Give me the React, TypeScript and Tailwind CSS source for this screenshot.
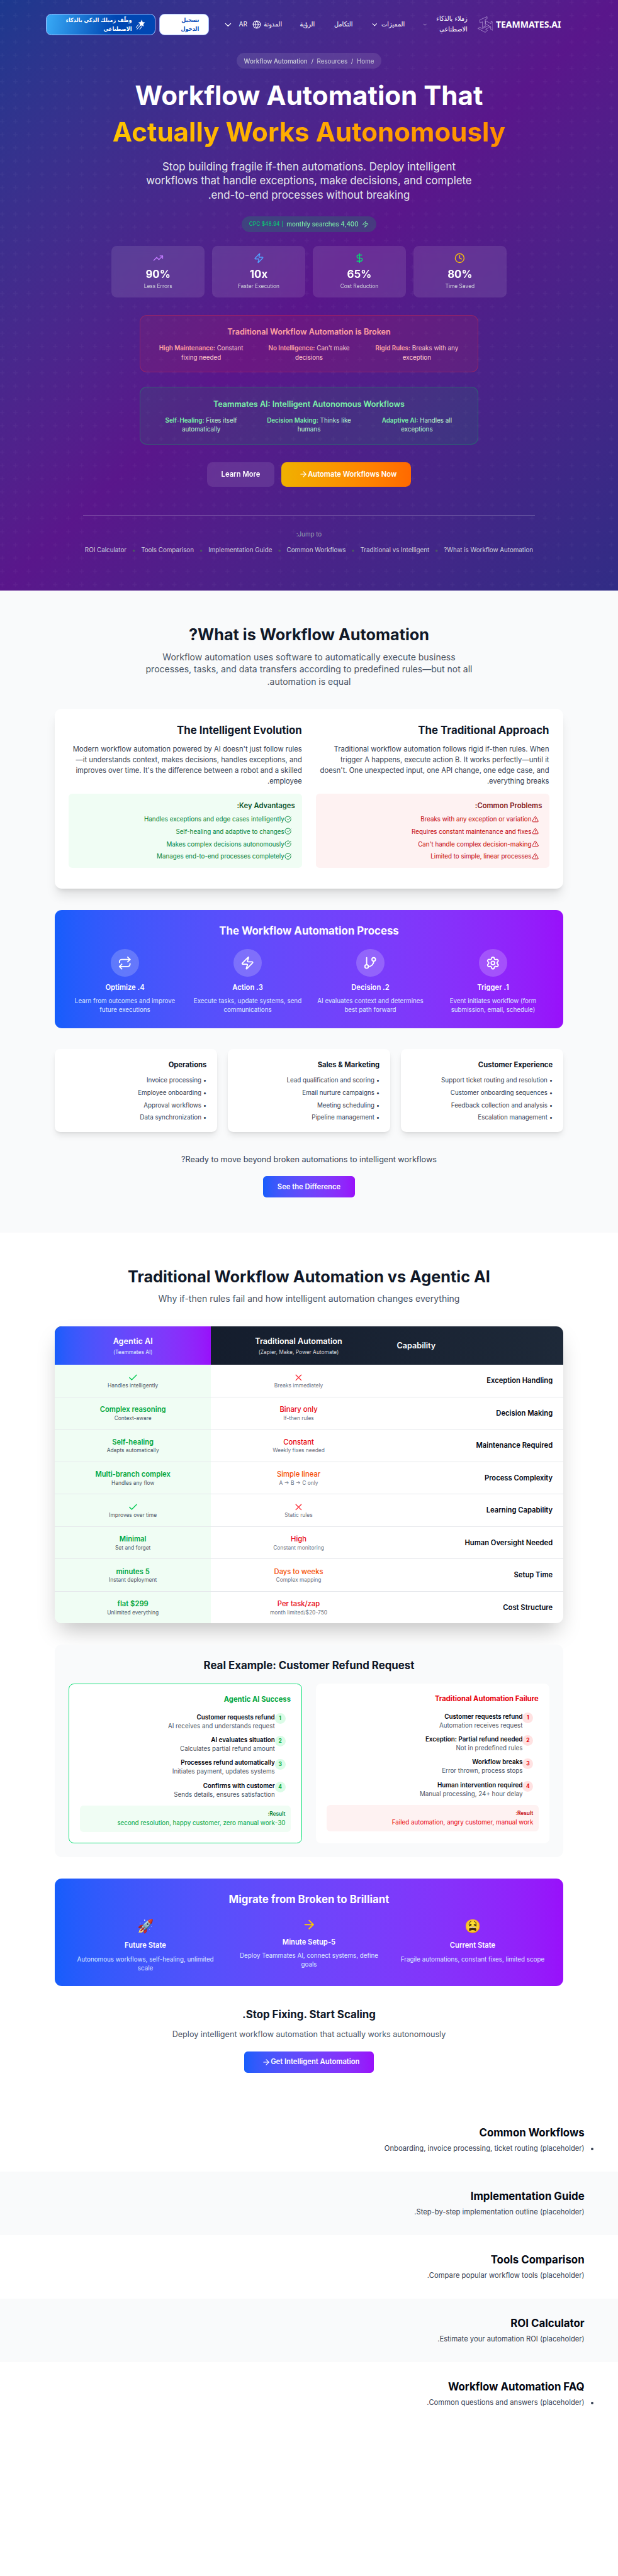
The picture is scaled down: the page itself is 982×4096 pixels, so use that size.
import type { ReactNode } from "react";
import {
  AlertTriangle,
  ArrowRight,
  Check,
  CheckCircle,
  ChevronDown,
  Clock,
  DollarSign,
  GitBranch,
  Globe,
  Repeat,
  Settings,
  TrendingUp,
  X,
  Zap,
} from "lucide-react";

function LogoMark() {
  return (
    <svg className="h-[37px] w-[35px]" viewBox="0 0 105 111" fill="none" stroke="#d9c8ee" strokeWidth="2.4" strokeLinejoin="round">
      <path d="M15 24 64 2v14l-13 6 1 46-19 8V37l-17 7z" />
      <path d="M54 30l37 20V33l12 7v55l-14-6V73L54 50z" />
      <path d="M2 82l13-8 17 10 42-21 13 7-33 18 12 8-15 13z" />
    </svg>
  );
}

function ShootingStar() {
  return (
    <svg className="h-[23px] w-[23px] shrink-0" viewBox="0 0 24 24" fill="none" stroke="white" strokeWidth="1.5" strokeLinecap="round">
      <path d="M15 1.5l2.3 4.9 5.2.7-3.8 3.7 1 5.3-4.7-2.5-4.7 2.5.9-5.3-3.7-3.7 5.2-.7z" fill="white" strokeWidth="0.5" />
      <path d="M7.5 12 2 19M10 16l-6 7M15 17l-4.500 6" />
    </svg>
  );
}

function Header() {
  return (
    <header className="flex h-12 items-center whitespace-nowrap pr-[129px] font-['DejaVu_Sans_Condensed','DejaVu_Sans',sans-serif] font-stretch-condensed text-white">
      <span className="w-[146px] text-right font-['Noto_Sans',sans-serif] text-[20px] leading-6 font-bold font-stretch-normal">TEAMMATES.AI</span>
      <span className="mr-2">
        <LogoMark />
      </span>
      <div className="mr-[23px] w-[75px] text-[15.5px] leading-6">
        <div>زملاء بالذكاء</div>
        <div>الاصطناعي</div>
      </div>
      <ChevronDown className="mr-4 size-3" strokeWidth={1.5} />
      <span className="mr-[39px] w-[58px] text-[15.5px]">المميزات</span>
      <ChevronDown className="mr-[2px] size-[18px]" />
      <span className="mr-[40px] w-[47px] text-[15.5px]">التكامل</span>
      <span className="mr-[39px] w-[35px] text-[15.5px]">الرؤية</span>
      <span className="mr-[39px] w-[48px] text-[15.5px]">المدونة</span>
      <Globe className="size-5" strokeWidth={1.8} />
      <span className="mr-[11px] w-[19px] font-['Open_Sans',sans-serif] text-[15px] font-stretch-normal">AR</span>
      <ChevronDown className="mr-3 size-6" strokeWidth={1.7} />
      <div className="mr-[32px] h-12 w-[113px] rounded-xl border-2 border-[#a3bfff] bg-white pt-[2px] pr-[21px] text-[13px] leading-5 font-bold text-[#0a4db8]">
        <div>تسجيل</div>
        <div>الدخول</div>
      </div>
      <div className="mr-2 flex h-12 w-[248px] items-center gap-2 rounded-xl border-2 border-[#a3bfff] bg-[linear-gradient(100deg,#38aaf6_0%,#0047b3_62%)] pr-[21px] text-[13px] leading-5 font-bold">
        <ShootingStar />
        <div>
          <div>وظّف زميلك الذكي بالذكاء</div>
          <div>الاصطناعي</div>
        </div>
      </div>
    </header>
  );
}

function PlusPattern() {
  return (
    <svg className="absolute inset-0 size-full" aria-hidden="true">
      <defs>
        <pattern id="plus" width="30" height="30" patternUnits="userSpaceOnUse">
          <path d="M6 4V0H4v4H0v2h4v4h2V6h4V4H6z" fill="#ffffff" fillOpacity="0.035" />
        </pattern>
      </defs>
      <rect width="100%" height="100%" fill="url(#plus)" />
    </svg>
  );
}

const stats = [
  { icon: <Clock className="size-6 text-yellow-400" />, value: "80%", label: "Time Saved" },
  { icon: <DollarSign className="size-6 text-green-400" />, value: "65%", label: "Cost Reduction" },
  { icon: <Zap className="size-6 text-blue-400" />, value: "10x", label: "Faster Execution" },
  { icon: <TrendingUp className="size-6 text-purple-400" />, value: "90%", label: "Less Errors" },
];

const broken = [
  ["Rigid Rules:", "Breaks with any exception"],
  ["No Intelligence:", "Can't make decisions"],
  ["High Maintenance:", "Constant fixing needed"],
];

const autonomous = [
  ["Adaptive AI:", "Handles all exceptions"],
  ["Decision Making:", "Thinks like humans"],
  ["Self-Healing:", "Fixes itself automatically"],
];

const jumps = [
  "What is Workflow Automation?",
  "Traditional vs Intelligent",
  "Common Workflows",
  "Implementation Guide",
  "Tools Comparison",
  "ROI Calculator",
];

function Hero() {
  return (
    <section className="relative h-[1339px] bg-linear-to-br from-blue-900 via-purple-900 to-indigo-900 pt-8">
      <PlusPattern />
      <div className="relative">
        <Header />
        <div className="mx-auto mt-10 flex max-w-5xl flex-col items-center text-center">
          <nav className="flex gap-2 rounded-full bg-white/10 px-4 py-2 text-sm text-gray-300 backdrop-blur-sm">
            <span>Home</span>
            <span>/</span>
            <span>Resources</span>
            <span>/</span>
            <span className="font-medium">Workflow Automation</span>
          </nav>
          <h1 className="mt-6 w-full text-6xl leading-tight font-bold text-white">
            Workflow Automation That
            <span className="mt-2 block bg-linear-to-r from-yellow-400 to-orange-400 bg-clip-text text-transparent">
              Actually Works Autonomously
            </span>
          </h1>
          <p className="mt-6 w-[768px] text-2xl text-gray-200">
            Stop building fragile if-then automations. Deploy intelligent workflows that handle exceptions, make decisions, and
            complete end-to-end processes without breaking.
          </p>
          <div className="mt-8 flex items-center gap-2 rounded-full bg-green-500/20 px-4 py-2 text-sm text-green-300 backdrop-blur-sm">
            <Zap className="size-4" />
            <span className="font-medium">4,400 monthly searches</span>
            <span className="text-xs text-green-400">| $48.94 CPC</span>
          </div>
          <div className="mt-8 grid w-[896px] grid-cols-4 gap-4">
            {stats.map((s) => (
              <div key={s.label} className="flex flex-col items-center rounded-xl bg-white/10 p-4 backdrop-blur-sm">
                {s.icon}
                <div className="mt-2 text-2xl font-bold text-white" dir="ltr">
                  {s.value}
                </div>
                <div className="mt-1 text-xs text-gray-300">{s.label}</div>
              </div>
            ))}
          </div>
          <div className="mt-10 w-[768px] rounded-2xl border border-red-500/30 bg-red-500/10 p-6">
            <h3 className="text-lg font-semibold text-red-300">Traditional Workflow Automation is Broken</h3>
            <div className="mt-3 grid grid-cols-3 gap-4 text-sm text-red-200">
              {broken.map(([a, b]) => (
                <div key={a}>
                  <strong className="font-semibold text-red-300">{a}</strong> {b}
                </div>
              ))}
            </div>
          </div>
          <div className="mt-8 w-[768px] rounded-2xl border border-green-500/30 bg-green-500/10 p-6">
            <h3 className="text-lg font-semibold text-green-300">Teammates AI: Intelligent Autonomous Workflows</h3>
            <div className="mt-3 grid grid-cols-3 gap-4 text-sm text-green-200">
              {autonomous.map(([a, b]) => (
                <div key={a}>
                  <strong className="font-semibold text-green-300">{a}</strong> {b}
                </div>
              ))}
            </div>
          </div>
          <div className="mt-10 flex gap-4 font-semibold text-white">
            <button className="flex items-center rounded-xl bg-linear-to-r from-yellow-500 to-orange-500 px-8 py-4">
              Automate Workflows Now
              <ArrowRight className="ml-2 size-5" />
            </button>
            <button className="rounded-xl bg-white/10 px-8 py-4 backdrop-blur-sm">Learn More</button>
          </div>
          <div className="mt-16 w-full border-t border-white/20 pt-8">
            <p className="text-sm text-gray-400">Jump to:</p>
            <div className="mt-4 flex justify-center gap-3 text-sm whitespace-nowrap text-gray-300">
              {jumps.map((j, i) => (
                <div key={j} className="flex gap-3">
                  {i > 0 && <span className="text-base text-gray-600">•</span>}
                  <span>{j}</span>
                </div>
              ))}
            </div>
          </div>
        </div>
      </div>
    </section>
  );
}

const problems = [
  "Breaks with any exception or variation",
  "Requires constant maintenance and fixes",
  "Can't handle complex decision-making",
  "Limited to simple, linear processes",
];

const advantages = [
  "Handles exceptions and edge cases intelligently",
  "Self-healing and adaptive to changes",
  "Makes complex decisions autonomously",
  "Manages end-to-end processes completely",
];

const steps = [
  { icon: <Settings className="size-8" />, title: "1. Trigger", text: "Event initiates workflow (form submission, email, schedule)" },
  { icon: <GitBranch className="size-8" />, title: "2. Decision", text: "AI evaluates context and determines best path forward" },
  { icon: <Zap className="size-8" />, title: "3. Action", text: "Execute tasks, update systems, send communications" },
  { icon: <Repeat className="size-8" />, title: "4. Optimize", text: "Learn from outcomes and improve future executions" },
];

const useCases = [
  {
    title: "Customer Experience",
    items: ["Support ticket routing and resolution", "Customer onboarding sequences", "Feedback collection and analysis", "Escalation management"],
  },
  {
    title: "Sales & Marketing",
    items: ["Lead qualification and scoring", "Email nurture campaigns", "Meeting scheduling", "Pipeline management"],
  },
  {
    title: "Operations",
    items: ["Invoice processing", "Employee onboarding", "Approval workflows", "Data synchronization"],
  },
];

function WhatIs() {
  return (
    <section className="bg-gray-50 py-20">
      <div className="mx-auto max-w-6xl">
        <h2 className="text-center text-4xl font-bold text-gray-900">What is Workflow Automation?</h2>
        <p className="mx-auto mt-4 max-w-3xl text-center text-xl text-gray-600">
          Workflow automation uses software to automatically execute business processes, tasks, and data transfers according to
          predefined rules—but not all automation is equal.
        </p>
        <div className="mt-12 grid grid-cols-2 gap-8 rounded-2xl bg-white p-8 pb-12 shadow-xl">
          <div>
            <h3 className="text-2xl font-bold text-gray-900">The Traditional Approach</h3>
            <p className="mt-4 text-gray-700">
              Traditional workflow automation follows rigid if-then rules. When trigger A happens, execute action B. It works
              perfectly—until it doesn't. One unexpected input, one API change, one edge case, and everything breaks.
            </p>
            <div className="mt-4 rounded-lg bg-red-50 p-4">
              <h4 className="font-semibold text-red-900">Common Problems:</h4>
              <ul className="mt-2 space-y-2 text-sm text-red-700">
                {problems.map((p) => (
                  <li key={p} className="flex items-center">
                    <AlertTriangle className="mr-2 size-4" />
                    {p}
                  </li>
                ))}
              </ul>
            </div>
          </div>
          <div>
            <h3 className="text-2xl font-bold text-gray-900">The Intelligent Evolution</h3>
            <p className="mt-4 text-gray-700">
              Modern workflow automation powered by AI doesn't just follow rules—it understands context, makes decisions, handles
              exceptions, and improves over time. It's the difference between a robot and a skilled employee.
            </p>
            <div className="mt-4 rounded-lg bg-green-50 p-4">
              <h4 className="font-semibold text-green-900">Key Advantages:</h4>
              <ul className="mt-2 space-y-2 text-sm text-green-700">
                {advantages.map((p) => (
                  <li key={p} className="flex items-center">
                    <CheckCircle className="mr-2 size-4" />
                    {p}
                  </li>
                ))}
              </ul>
            </div>
          </div>
        </div>
        <div className="mt-12 rounded-2xl bg-linear-to-r from-blue-600 to-purple-600 p-8 text-center text-white">
          <h3 className="text-2xl font-bold">The Workflow Automation Process</h3>
          <div className="mt-6 grid grid-cols-4 gap-6">
            {steps.map((s) => (
              <div key={s.title}>
                <div className="mx-auto flex size-16 items-center justify-center rounded-full bg-white/20">{s.icon}</div>
                <h4 className="mt-3 font-semibold">{s.title}</h4>
                <p className="mt-2 text-sm text-blue-100">{s.text}</p>
              </div>
            ))}
          </div>
        </div>
        <div className="mt-12 grid grid-cols-3 gap-6">
          {useCases.map((u) => (
            <div key={u.title} className="rounded-xl bg-white p-6 shadow-lg">
              <h4 className="font-bold text-gray-900">{u.title}</h4>
              <ul className="mt-3 space-y-2 text-sm text-gray-700">
                {u.items.map((i) => (
                  <li key={i}>• {i}</li>
                ))}
              </ul>
            </div>
          ))}
        </div>
        <div className="mt-12 text-center">
          <p className="text-lg text-gray-700">Ready to move beyond broken automations to intelligent workflows?</p>
          <button className="mt-6 rounded-lg bg-linear-to-r from-blue-600 to-purple-600 px-8 py-3 font-semibold text-white">
            See the Difference
          </button>
        </div>
      </div>
    </section>
  );
}

type Tone = "red" | "orange" | "none";
type Row = { name: string; old: string; oldNote: string; tone: Tone; ai: string; aiNote: string };

const rows: Row[] = [
  { name: "Exception Handling", old: "", oldNote: "Breaks immediately", tone: "none", ai: "", aiNote: "Handles intelligently" },
  { name: "Decision Making", old: "Binary only", oldNote: "If-then rules", tone: "red", ai: "Complex reasoning", aiNote: "Context-aware" },
  { name: "Maintenance Required", old: "Constant", oldNote: "Weekly fixes needed", tone: "red", ai: "Self-healing", aiNote: "Adapts automatically" },
  { name: "Process Complexity", old: "Simple linear", oldNote: "A → B → C only", tone: "orange", ai: "Multi-branch complex", aiNote: "Handles any flow" },
  { name: "Learning Capability", old: "", oldNote: "Static rules", tone: "none", ai: "", aiNote: "Improves over time" },
  { name: "Human Oversight Needed", old: "High", oldNote: "Constant monitoring", tone: "red", ai: "Minimal", aiNote: "Set and forget" },
  { name: "Setup Time", old: "Days to weeks", oldNote: "Complex mapping", tone: "orange", ai: "5 minutes", aiNote: "Instant deployment" },
  { name: "Cost Structure", old: "Per task/zap", oldNote: "$20-750/month limited", tone: "red", ai: "$299 flat", aiNote: "Unlimited everything" },
];

function ComparisonTable() {
  return (
    <div className="mt-12 overflow-hidden rounded-2xl bg-white shadow-2xl">
      <div className="grid h-[88px] grid-cols-[401px_397px_354px] bg-linear-to-r from-gray-900 to-gray-800 text-white">
        <div className="self-center px-6 text-left text-lg font-semibold">Capability</div>
        <div className="self-center text-center">
          <div className="text-lg font-semibold">Traditional Automation</div>
          <div className="mt-1 text-xs text-gray-300">(Zapier, Make, Power Automate)</div>
        </div>
        <div className="flex flex-col justify-center bg-linear-to-r from-blue-600 to-purple-600 text-center">
          <div className="text-lg font-semibold">Agentic AI</div>
          <div className="mt-1 text-xs text-blue-100">(Teammates AI)</div>
        </div>
      </div>
      <div className="divide-y divide-gray-200">
        {rows.map((r) => (
          <div key={r.name} className="grid grid-cols-[401px_397px_354px]">
            <div className="self-center px-6 font-semibold text-gray-950">{r.name}</div>
            <div className="flex flex-col items-center py-4 text-center">
              {r.tone === "none" ? (
                <X className="size-6 text-red-500" />
              ) : (
                <div className={r.tone === "red" ? "font-medium text-red-600" : "font-medium text-orange-600"}>{r.old}</div>
              )}
              <div className="text-xs text-gray-500">{r.oldNote}</div>
            </div>
            <div className="flex flex-col items-center bg-green-50 py-4 text-center">
              {r.ai === "" ? <Check className="size-6 text-green-500" /> : <div className="font-semibold text-green-600">{r.ai}</div>}
              <div className="text-xs text-gray-600">{r.aiNote}</div>
            </div>
          </div>
        ))}
      </div>
    </div>
  );
}

const failure = [
  ["Customer requests refund", "Automation receives request"],
  ["Exception: Partial refund needed", "Not in predefined rules"],
  ["Workflow breaks", "Error thrown, process stops"],
  ["Human intervention required", "Manual processing, 24+ hour delay"],
];

const success = [
  ["Customer requests refund", "AI receives and understands request"],
  ["AI evaluates situation", "Calculates partial refund amount"],
  ["Processes refund automatically", "Initiates payment, updates systems"],
  ["Confirms with customer", "Sends details, ensures satisfaction"],
];

function StepList({ items, badge }: { items: string[][]; badge: string }) {
  return (
    <div className="mt-4 space-y-3 text-sm">
      {items.map(([a, b], i) => (
        <div key={a} className="flex items-start">
          <span className={badge}>{i + 1}</span>
          <div>
            <p className="font-semibold text-gray-950">{a}</p>
            <p className="text-gray-600">{b}</p>
          </div>
        </div>
      ))}
    </div>
  );
}

function Comparison() {
  return (
    <section className="bg-white py-20">
      <div className="mx-auto max-w-6xl">
        <h2 className="text-center text-4xl font-bold text-gray-900">Traditional Workflow Automation vs Agentic AI</h2>
        <p className="mt-4 text-center text-xl text-gray-600">
          Why if-then rules fail and how intelligent automation changes everything
        </p>
        <ComparisonTable />
        <div className="mt-12 rounded-2xl bg-gray-50 p-8">
          <h3 className="text-center text-2xl font-bold text-gray-900">Real Example: Customer Refund Request</h3>
          <div className="mt-6 grid grid-cols-2 gap-8">
            <div className="rounded-xl bg-white p-6">
              <h4 className="font-bold text-red-600">Traditional Automation Failure</h4>
              <StepList
                items={failure}
                badge="mt-0.5 mr-3 flex size-6 shrink-0 items-center justify-center rounded-full bg-red-100 text-xs font-bold text-red-600"
              />
              <div className="mt-4 rounded-lg bg-red-50 p-3">
                <p className="text-xs font-semibold text-red-700">Result:</p>
                <p className="text-sm text-red-600">Failed automation, angry customer, manual work</p>
              </div>
            </div>
            <div className="rounded-xl border-2 border-green-400 bg-white p-6">
              <h4 className="font-bold text-green-600">Agentic AI Success</h4>
              <StepList
                items={success}
                badge="mt-0.5 mr-3 flex size-6 shrink-0 items-center justify-center rounded-full bg-green-100 text-xs font-bold text-green-600"
              />
              <div className="mt-4 rounded-lg bg-green-50 p-3">
                <p className="text-xs font-semibold text-green-700">Result:</p>
                <p className="text-sm text-green-600">30-second resolution, happy customer, zero manual work</p>
              </div>
            </div>
          </div>
        </div>
        <div className="mt-12 rounded-2xl bg-linear-to-r from-blue-600 to-purple-600 p-8 text-center text-white">
          <h3 className="text-2xl font-bold">Migrate from Broken to Brilliant</h3>
          <div className="mt-6 grid grid-cols-3 gap-6">
            <Stage icon={<div className="h-10 text-[30px] leading-10">😫</div>} title="Current State" text="Fragile automations, constant fixes, limited scope" />
            <Stage
              icon={<ArrowRight className="mx-auto size-8 text-yellow-400" />}
              title="5-Minute Setup"
              text="Deploy Teammates AI, connect systems, define goals"
            />
            <Stage icon={<div className="h-10 text-[30px] leading-10">🚀</div>} title="Future State" text="Autonomous workflows, self-healing, unlimited scale" />
          </div>
        </div>
        <div className="mt-12 flex flex-col items-center text-center">
          <h3 className="text-2xl font-bold text-gray-900">Stop Fixing. Start Scaling.</h3>
          <p className="mt-4 text-lg text-gray-600">Deploy intelligent workflow automation that actually works autonomously</p>
          <button className="mt-6 flex items-center rounded-lg bg-linear-to-r from-blue-600 to-purple-600 px-8 py-3 font-semibold text-white">
            Get Intelligent Automation
            <ArrowRight className="ml-2 size-5" />
          </button>
        </div>
      </div>
    </section>
  );
}

function Stage({ icon, title, text }: { icon: ReactNode; title: string; text: string }) {
  return (
    <div>
      {icon}
      <h4 className="mt-3 font-semibold">{title}</h4>
      <p className="mt-2 text-sm text-blue-100">{text}</p>
    </div>
  );
}

const outline = [
  { title: "Common Workflows", text: "Onboarding, invoice processing, ticket routing (placeholder)", list: true },
  { title: "Implementation Guide", text: "Step-by-step implementation outline (placeholder).", list: false },
  { title: "Tools Comparison", text: "Compare popular workflow tools (placeholder).", list: false },
  { title: "ROI Calculator", text: "Estimate your automation ROI (placeholder).", list: false },
  { title: "Workflow Automation FAQ", text: "Common questions and answers (placeholder).", list: true },
];

function Outline() {
  return (
    <>
      {outline.map((o, i) => (
        <section key={o.title} className={i % 2 ? "bg-gray-50 py-10" : "bg-white py-10"}>
          <div className="mx-auto max-w-7xl px-4">
            <h2 className="text-2xl font-bold text-gray-950">{o.title}</h2>
            {o.list ? (
              <ul className="mt-2 list-disc text-gray-700">
                <li>{o.text}</li>
              </ul>
            ) : (
              <p className="mt-2 text-gray-700">{o.text}</p>
            )}
          </div>
        </section>
      ))}
    </>
  );
}

export default function App() {
  return (
    <div dir="rtl" className="h-[5840px] w-[1400px] overflow-hidden bg-white font-[Inter,sans-serif] [zoom:0.7014]">
      <Hero />
      <WhatIs />
      <Comparison />
      <Outline />
    </div>
  );
}
